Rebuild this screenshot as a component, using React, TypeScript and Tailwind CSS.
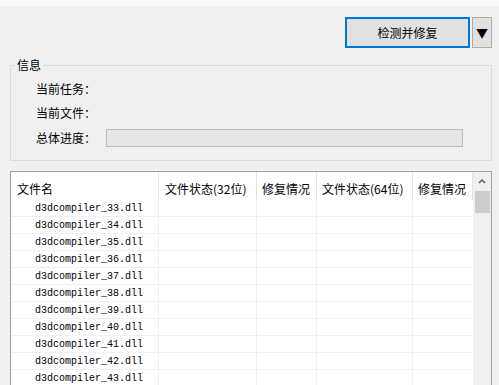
import React from 'react';

const cjk = { fontFamily: '"Noto Sans CJK SC", "Noto Sans", sans-serif' };
const mono = { fontFamily: '"Liberation Mono", "Noto Sans CJK SC", monospace' };

const files = Array.from({ length: 11 }, (_, i) => `d3dcompiler_${33 + i}.dll`);

const columns = [
  { title: '文件名', w: 'w-[148px]', pad: 'pl-[6px]' },
  { title: '文件状态(32位)', w: 'w-[98px]', pad: 'pl-[6px]' },
  { title: '修复情况', w: 'w-[60px]', pad: 'pl-[5px]' },
  { title: '文件状态(64位)', w: 'w-[96px]', pad: 'pl-[5px]' },
  { title: '修复情况', w: 'w-[60px]', pad: 'pl-[5px]' },
];

export default function App() {
  return (
    <div className="w-[499px] h-[385px] overflow-hidden bg-[#f0f0f0] text-[12px] text-black flex flex-col" style={cjk}>
      {/* light title strip */}
      <div className="h-[6px] bg-[#f8f8f8] shrink-0" />

      {/* action buttons */}
      <div className="flex justify-end gap-[2px] pr-[7px] mt-[11px] shrink-0">
        <button className="w-[125px] h-[31px] bg-[#e1e1e1] border-2 border-[#0078d7] flex items-center justify-center leading-none">
          检测并修复
        </button>
        <button className="w-[20px] h-[31px] bg-[#e1e1e1] border border-[#adadad] flex items-center justify-center text-[12px] leading-none">
          ▼
        </button>
      </div>

      {/* info group */}
      <fieldset className="mx-[10px] mt-[9px] w-[482px] border border-[#dcdcdc] pl-[4px] pr-[28px] pb-[9px] shrink-0">
        <legend className="px-[2px] leading-[16px]">信息</legend>
        <div className="flex flex-col pt-[4px] pl-[21px]">
          <div className="h-[24px] flex items-center">当前任务：</div>
          <div className="h-[24px] flex items-center">当前文件：</div>
          <div className="h-[26px] flex items-center">
            <span className="w-[70px] shrink-0">总体进度：</span>
            <div className="flex-1 h-[18px] bg-[#e6e6e6] border border-[#bcbcbc]" />
          </div>
        </div>
      </fieldset>

      {/* file list */}
      <div className="mx-[10px] mt-[10px] w-[482px] flex-1 bg-white border border-[#a0a0a0] flex">
        <div className="w-[462px] shrink-0 flex flex-col">
          <div className="flex h-[28px] shrink-0">
            {columns.map((c, i) => (
              <div key={i} className={`${c.w} ${c.pad} pt-[9px] leading-[16px] border-r border-[#e5e5e5] whitespace-nowrap`}>
                {c.title}
              </div>
            ))}
          </div>
          {files.map((f) => (
            <div key={f} className="flex h-[17px] border-b border-[#f0f0f0] shrink-0">
              <div className="w-[148px] pl-[24px] text-[10px] leading-[17px] text-black border-r border-[#f0f0f0]" style={mono}>
                {f}
              </div>
              <div className="w-[98px] border-r border-[#f0f0f0]" />
              <div className="w-[60px] border-r border-[#f0f0f0]" />
              <div className="w-[96px] border-r border-[#f0f0f0]" />
              <div className="w-[60px]" />
            </div>
          ))}
        </div>

        {/* vertical scrollbar */}
        <div className="w-[18px] shrink-0 bg-[#f0f0f0] flex flex-col items-center">
          <div className="h-[19px] w-full flex items-center justify-center">
            <svg width="8" height="5" viewBox="0 0 8 5">
              <path d="M1 4 L4 1 L7 4" fill="none" stroke="#606060" strokeWidth="1.5" />
            </svg>
          </div>
          <div className="w-[15px] h-[22px] bg-[#cdcdcd]" />
        </div>
      </div>
    </div>
  );
}
